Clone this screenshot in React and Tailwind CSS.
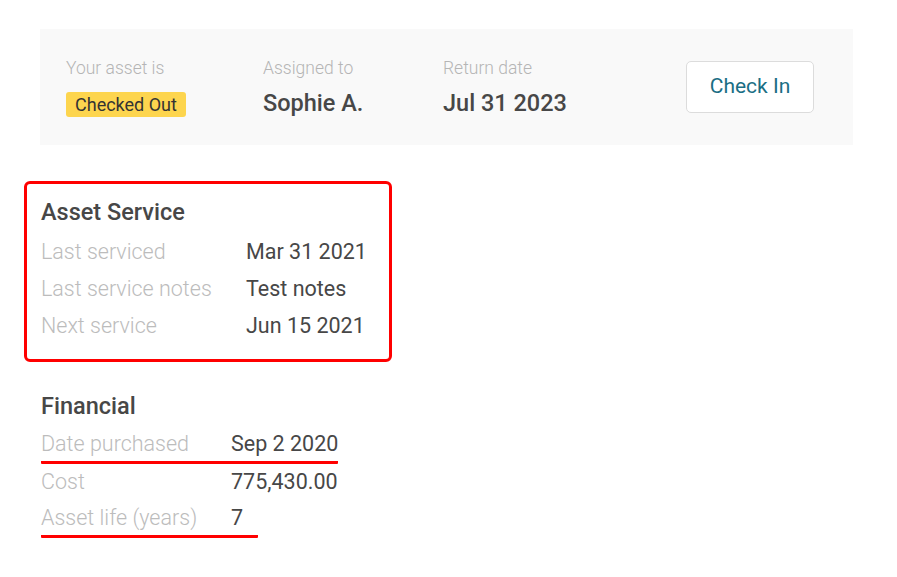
const font = { fontFamily: 'Roboto, "Liberation Sans", sans-serif' }

function StatusItem({ label, children, className = '' }) {
  return (
    <div className={`flex flex-col ${className}`}>
      <span className="text-[17.5px] leading-[24px] font-light text-[#b5b5b5]">{label}</span>
      <div className="mt-[12px] h-[25px] flex items-center">{children}</div>
    </div>
  )
}

function Row({ label, value, labelWidth, underline }) {
  return (
    <div
      className={`flex items-center h-[37px] text-[21.5px] whitespace-nowrap ${underline ? `${underline} border-b-[3px] border-[#f00] rounded-[1px]` : ''}`}
    >
      <span className="font-light text-[#bcbcbc] shrink-0" style={{ width: labelWidth }}>{label}</span>
      <span className="text-[#474747]">{value}</span>
    </div>
  )
}

export default function App() {
  return (
    <div className="min-h-screen bg-white pt-[29px] pl-[40px]" style={font}>
      <div className="w-[813px] h-[116px] bg-[#f9f9f9] flex items-center pl-[26px] pr-[39px]">
        <StatusItem label="Your asset is" className="w-[197px] -mt-[2px]">
          <span className="bg-[#fdd54e] text-[#333] text-[18px] leading-[25px] px-[9px] rounded-[3px]">Checked Out</span>
        </StatusItem>
        <StatusItem label="Assigned to" className="w-[180px] -mt-[2px]">
          <span className="text-[23.5px] font-medium text-[#474747]">Sophie A.</span>
        </StatusItem>
        <StatusItem label="Return date" className="w-[180px] -mt-[2px]">
          <span className="text-[23.5px] font-medium text-[#474747]">Jul 31 2023</span>
        </StatusItem>
        <button className="ml-auto w-[128px] h-[52px] bg-white border border-[#dcdcdc] rounded-[5px] text-[21px] text-[#1a6e84]">
          Check In
        </button>
      </div>

      <div className="mt-[36px] -ml-[16px] w-[368px] border-[3px] border-[#f00] rounded-[6px] pl-[14px] pt-[13px] pb-[14px]">
        <h2 className="text-[23.5px] leading-[30px] font-medium text-[#474747] mb-[7px]">Asset Service</h2>
        <Row label="Last serviced" value="Mar 31 2021" labelWidth={205} />
        <Row label="Last service notes" value="Test notes" labelWidth={205} />
        <Row label="Next service" value="Jun 15 2021" labelWidth={205} />
      </div>

      <div className="mt-[29px] pl-[1px]">
        <h2 className="text-[23.5px] leading-[30px] font-medium text-[#474747] mb-[6px]">Financial</h2>
        <Row label="Date purchased" value="Sep 2 2020" labelWidth={190} underline="w-[297px]" />
        <Row label="Cost" value="775,430.00" labelWidth={190} />
        <Row label="Asset life (years)" value="7" labelWidth={190} underline="w-[217px]" />
      </div>
    </div>
  )
}
